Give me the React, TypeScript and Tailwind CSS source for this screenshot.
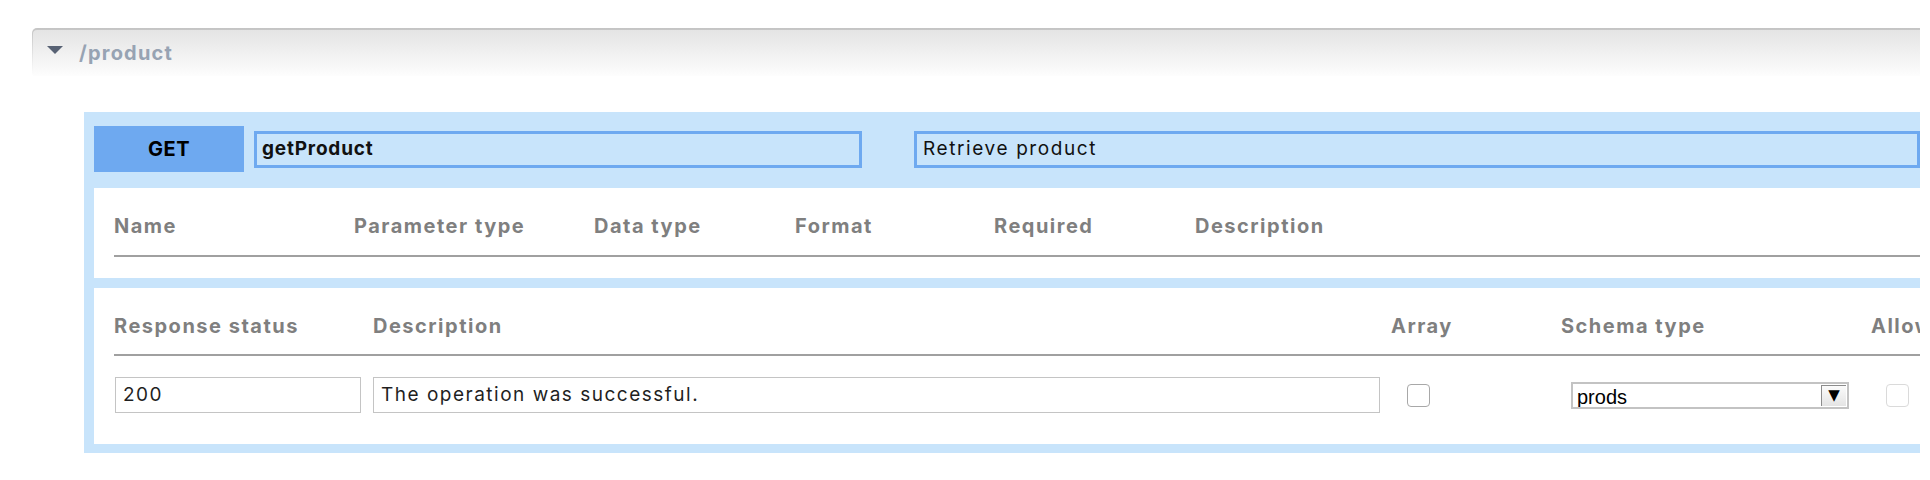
const labelCls = "text-[20px] font-bold leading-6 tracking-[1.5px] text-[#7f7f7f] whitespace-nowrap";
const fieldCls = "flex h-[36px] items-center border border-[#c4c4c4] bg-white pl-[7px] text-[19px] tracking-[1.5px] text-[#1f1f1f]";

function Checkbox({ light }: { light?: boolean }) {
  return (
    <div
      className={
        "size-[23px] rounded-[4px] border bg-white " + (light ? "border-[#dadada]" : "border-[#a8a8a8]")
      }
    />
  );
}

export default function App() {
  return (
    <div className="min-h-[480px] bg-white pl-[32px] pr-[10px] pt-[28px] font-['Inter',sans-serif]">
      {/* resource header */}
      <div className="rounded-tl-[5px] bg-gradient-to-b from-[#c4c4c4] to-white pl-px pt-[2px]">
        <div className="flex h-[46px] items-center rounded-tl-[4px] bg-gradient-to-b from-[#e4e4e4] to-[#fdfdfd] pl-[14px]">
          <svg className="-mt-[7px]" width="16" height="8" viewBox="0 0 16 8">
            <path d="M0 0h16L8 8z" fill="#586274" />
          </svg>
          <span className="ml-[16px] text-[20px] font-bold tracking-[1.2px] text-[#97a3b3]">/product</span>
        </div>
      </div>

      {/* operation panel */}
      <div className="ml-[52px] mt-[36px] overflow-hidden bg-[#c8e4fb] pb-[9px] pl-[10px] pt-[14px]">
        <div className="flex items-center">
          <div className="flex h-[46px] w-[150px] items-center justify-center bg-[#6ea9f0] text-[20px] font-bold tracking-[0.5px] text-black">
            GET
          </div>
          <div className="ml-[10px] flex h-[37px] w-[608px] items-center border-[3px] border-[#6ea9f0] pl-[5px] text-[19px] font-bold tracking-[0.8px] text-[#111]">
            getProduct
          </div>
          <div className="ml-[52px] flex h-[37px] flex-1 items-center border-[3px] border-[#6ea9f0] pl-[6px] text-[19px] tracking-[1.6px] text-[#111]">
            Retrieve product
          </div>
        </div>

        {/* parameters */}
        <div className="mt-[16px] bg-white pb-[21px] pl-[20px] pt-[26px]">
          <div className="flex border-b-2 border-[#a0a0a0] pb-[17px]">
            <span className={"w-[240px] " + labelCls}>Name</span>
            <span className={"w-[240px] " + labelCls}>Parameter type</span>
            <span className={"w-[201px] " + labelCls}>Data type</span>
            <span className={"w-[199px] " + labelCls}>Format</span>
            <span className={"w-[201px] " + labelCls}>Required</span>
            <span className={labelCls}>Description</span>
          </div>
        </div>

        {/* responses */}
        <div className="mt-[10px] overflow-hidden bg-white pb-[31px] pl-[20px] pt-[26px]">
          <div className="grid grid-cols-[259px_1018px_170px_310px_1fr] border-b-2 border-[#a0a0a0] pb-[16px]">
            <span className={labelCls}>Response status</span>
            <span className={labelCls}>Description</span>
            <span className={labelCls}>Array</span>
            <span className={labelCls}>Schema type</span>
            <span className={"overflow-hidden " + labelCls}>Allow</span>
          </div>
          <div className="mt-[21px] grid grid-cols-[259px_1018px_170px_310px_1fr] items-center">
            <div className={"ml-px w-[246px] " + fieldCls}>200</div>
            <div className={"w-[1007px] " + fieldCls}>The operation was successful.</div>
            <div className="pl-[16px]">
              <Checkbox />
            </div>
            <div className="pl-[10px]">
              <div className="flex h-[27px] w-[278px] overflow-hidden border-2 border-[#c3c3c3] bg-white">
                <span className="flex-1 pl-[4px] pt-[3px] font-['Liberation_Sans',Arial,sans-serif] text-[20px] leading-[20px] text-black">
                  prods
                </span>
                <span className="m-px flex w-[25px] items-center justify-center border-l border-t border-[#8c8c8c] bg-gradient-to-b from-[#fbfbfb] to-[#e4e4e4] font-['DejaVu_Sans',sans-serif] text-[15px] text-black">
                  ▼
                </span>
              </div>
            </div>
            <div className="pl-[15px]">
              <Checkbox light />
            </div>
          </div>
        </div>
      </div>
    </div>
  );
}
